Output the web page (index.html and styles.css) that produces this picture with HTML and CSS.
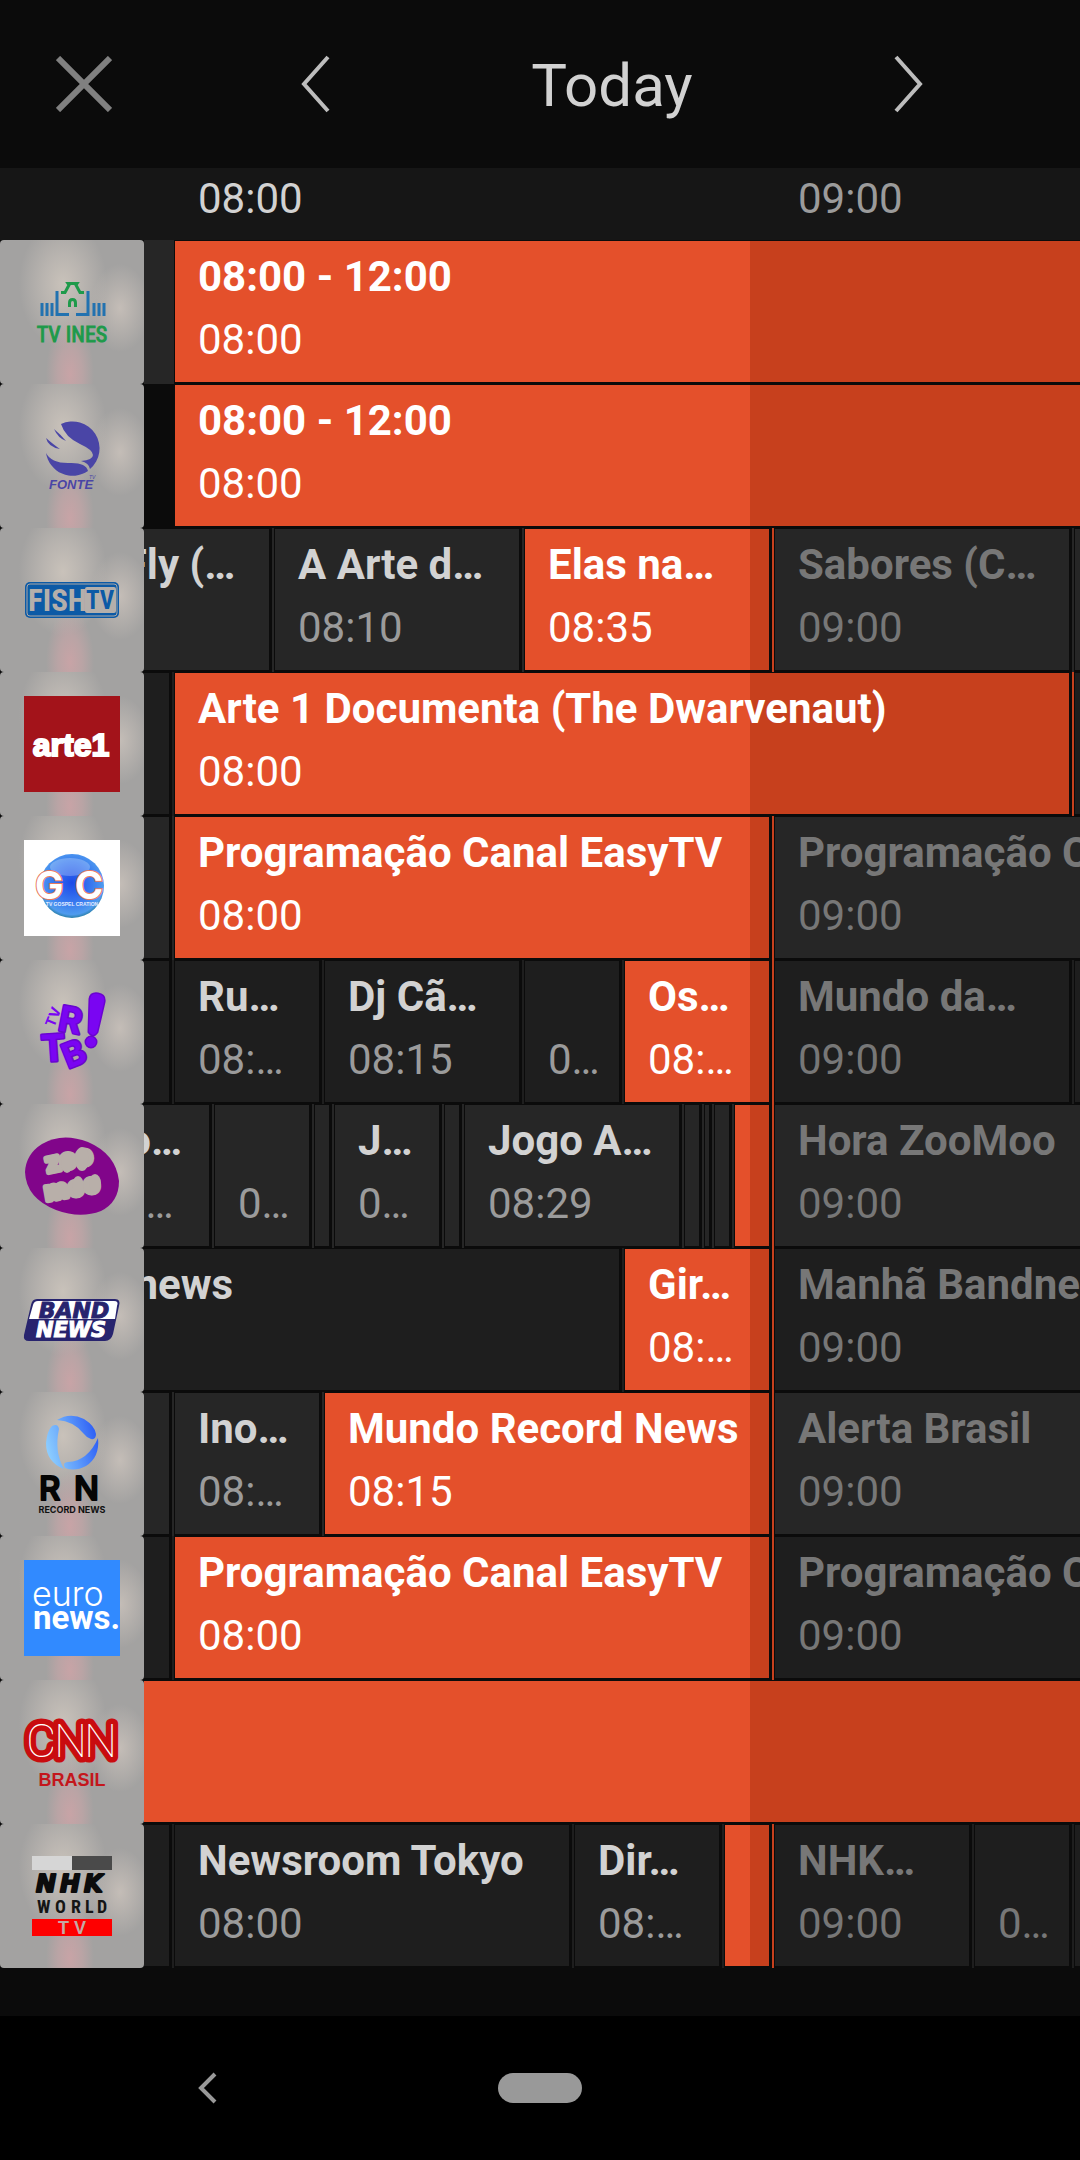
FILE: index.html
```html
<!DOCTYPE html>
<html lang="pt">
<head>
    <meta charset="UTF-8">
    <meta name="viewport" content="width=device-width, initial-scale=1.0">
    <title>TV Guide</title>
    <link rel="stylesheet" href="styles.css">
</head>
<body>

    <header class="topbar">
        <button class="icon-btn close" type="button" aria-label="Close">
            <svg width="56" height="56" viewBox="0 0 56 56"><path d="M2 2L54 54M54 2L2 54"/></svg>
        </button>
        <div class="day-nav">
            <button class="icon-btn" type="button" aria-label="Previous day">
                <svg width="32" height="60" viewBox="0 0 32 60"><path d="M28 3L4 30L28 57"/></svg>
            </button>
            <h1>Today</h1>
            <button class="icon-btn" type="button" aria-label="Next day">
                <svg width="32" height="60" viewBox="0 0 32 60"><path d="M4 3L28 30L4 57"/></svg>
            </button>
        </div>
    </header>

    <div class="timebar">
        <span class="hour">08:00</span>
        <span class="hour next">09:00</span>
    </div>

    <!-- --from / --at: minutes relative to 08:00, --min: length in minutes -->
    <main class="guide">

        <section class="row">
            <div class="channel">
                <svg viewBox="0 0 144 144" role="img" aria-label="TV INES">
                    <g fill="none" stroke="#2272b0" stroke-width="3">
                        <path d="M42 63V76M47 63V76M52 63V76M94 63V76M99 63V76M104 63V76"/>
                        <path d="M57 51V74.500H69M76 74.500H88V51"/>
                    </g>
                    <g fill="none" stroke="#1e9a4a" stroke-width="3">
                        <path d="M61 52.500H65L69 45L68 43.500H77L76 45L80 52.500H84"/>
                        <path d="M69.500 67V63Q69.500 59.500 72.500 59.500Q75.500 59.500 75.500 63V67"/>
                    </g>
                    <text class="narrow" x="72" y="102" font-size="22" text-anchor="middle" fill="#1e9a4a" stroke="#1e9a4a">TV INES</text>
                </svg>
            </div>
            <div class="lane lane-filled">
                <div class="track" style="--from: 0">
                    <div class="show live" style="--at: 0; --min: 240"><div class="box"><h2>08:00 - 12:00</h2><p>08:00</p></div></div>
                </div>
            </div>
        </section>

        <section class="row">
            <div class="channel">
                <svg viewBox="0 0 144 144" role="img" aria-label="Fonte TV">
                    <g fill="#4a45a6">
                        <path d="M61 40A27 27 0 0 1 90 85Q89 79 81 77Q93 76 93 71Q93 66 80 60Q65 53 61 40Z"/>
                        <path d="M46 69Q51 79 68 79Q86 78 88 87A27 27 0 0 1 46 69Z"/>
                        <path d="M54 45Q58 54 66 57Q60 50 54 45Z"/>
                        <path d="M46 54Q48 63 60 65Q54 61 46 54Z"/>
                    </g>
                    <text x="49" y="105" font-size="13" font-weight="700" font-style="italic" fill="#4a45a6">FONTE</text>
                    <text x="89" y="95" font-size="5" font-style="italic" fill="#4a45a6">TV</text>
                </svg>
            </div>
            <div class="lane lane-empty">
                <div class="track" style="--from: 0">
                    <div class="show live" style="--at: 0; --min: 240"><div class="box"><h2>08:00 - 12:00</h2><p>08:00</p></div></div>
                </div>
            </div>
        </section>

        <section class="row">
            <div class="channel">
                <svg viewBox="0 0 144 144" role="img" aria-label="Fish TV">
                    <rect x="25" y="54" width="94" height="36" rx="5" fill="#0c5aa6"/>
                    <rect x="27" y="56" width="90" height="32" rx="3" fill="none" stroke="#aaa7a5"/>
                    <text class="narrow" x="28" y="83" font-size="31" font-weight="700" fill="#b4afab">FISH</text>
                    <rect x="85" y="59" width="31" height="26" rx="2" fill="#b4afab"/>
                    <text class="narrow" x="100" y="81" font-size="25" font-weight="700" text-anchor="middle" fill="#0c5aa6">TV</text>
                </svg>
            </div>
            <div class="lane">
                <div class="track" style="--from: -17">
                    <div class="show" style="--min: 27"><div class="box"><h2>Best Fly (…</h2><p>07:43</p></div></div>
                    <div class="show" style="--min: 25"><div class="box"><h2>A Arte d…</h2><p>08:10</p></div></div>
                    <div class="show live" style="--at: 35; --min: 25"><div class="box"><h2>Elas na…</h2><p>08:35</p></div></div>
                    <div class="show later" style="--min: 30"><div class="box"><h2>Sabores (C…</h2><p>09:00</p></div></div>
                    <div class="show later" style="--min: 30"><div class="box"></div></div>
                </div>
            </div>
        </section>

        <section class="row">
            <div class="channel">
                <svg viewBox="0 0 144 144" role="img" aria-label="Arte 1">
                    <rect x="24" y="24" width="96" height="96" fill="#a3131a"/>
                    <text x="71" y="84" font-size="32" font-weight="700" text-anchor="middle" fill="#fff" stroke="#fff" stroke-width="2">arte1</text>
                </svg>
            </div>
            <div class="lane">
                <div class="track" style="--from: -30">
                    <div class="show" style="--min: 30"><div class="box"></div></div>
                    <div class="show live" style="--at: 0; --min: 90"><div class="box"><h2>Arte 1 Documenta (The Dwarvenaut)</h2><p>08:00</p></div></div>
                    <div class="show later" style="--min: 30"><div class="box"></div></div>
                </div>
            </div>
        </section>

        <section class="row">
            <div class="channel">
                <svg viewBox="0 0 144 144" role="img" aria-label="TV Gospel">
                    <defs>
                        <radialGradient id="globe" cx="50%" cy="45%" r="55%">
                            <stop offset="0" stop-color="#1d49e8"/>
                            <stop offset="0.6" stop-color="#3a7cf0"/>
                            <stop offset="0.9" stop-color="#4f9bee"/>
                            <stop offset="1" stop-color="#2a7fa8"/>
                        </radialGradient>
                    </defs>
                    <rect x="24" y="24" width="96" height="96" fill="#fff"/>
                    <circle cx="72" cy="70" r="32" fill="url(#globe)"/>
                    <ellipse cx="70" cy="51" rx="20" ry="9" fill="#fff" opacity="0.25"/>
                    <text class="geo" x="35 75" y="83" font-size="38" font-weight="700" fill="#fff" stroke="#e8795c" stroke-width="2" paint-order="stroke">GC</text>
                    <text x="72" y="90" font-size="5" font-weight="700" text-anchor="middle" fill="#e4ecff">TV GOSPEL CRATION</text>
                </svg>
            </div>
            <div class="lane">
                <div class="track" style="--from: -60">
                    <div class="show" style="--min: 60"><div class="box"></div></div>
                    <div class="show live" style="--at: 0; --min: 60"><div class="box"><h2>Programação Canal EasyTV</h2><p>08:00</p></div></div>
                    <div class="show later" style="--min: 60"><div class="box"><h2>Programação Canal EasyTV</h2><p>09:00</p></div></div>
                </div>
            </div>
        </section>

        <section class="row">
            <div class="channel">
                <svg viewBox="0 0 144 144" role="img" aria-label="TV RIT B!">
                    <g class="geo" font-weight="700" fill="#7a05f2" stroke="#6a04cf" stroke-width="3" stroke-linejoin="round" paint-order="stroke">
                        <text font-size="14" transform="translate(54 68) rotate(-68)" stroke-width="0">TV</text>
                        <text font-size="35" transform="translate(57 70) rotate(11)">R</text>
                        <text font-size="37" transform="translate(42 102) rotate(-4)">T</text>
                        <text font-size="34" transform="translate(68 109) rotate(-22)">B</text>
                        <path d="M89 72L90 39Q91 33 98 34Q105 35 104 42L97 72Q93 78 89 72Z"/>
                        <circle cx="91" cy="82" r="5"/>
                    </g>
                </svg>
            </div>
            <div class="lane">
                <div class="track" style="--from: -30">
                    <div class="show" style="--min: 30"><div class="box"></div></div>
                    <div class="show" style="--min: 15"><div class="box"><h2>Ru…</h2><p>08:…</p></div></div>
                    <div class="show" style="--min: 20"><div class="box"><h2>Dj Cã…</h2><p>08:15</p></div></div>
                    <div class="show" style="--min: 10"><div class="box"><h2></h2><p>0…</p></div></div>
                    <div class="show live" style="--at: 45; --min: 15"><div class="box"><h2>Os…</h2><p>08:…</p></div></div>
                    <div class="show later" style="--min: 30"><div class="box"><h2>Mundo da…</h2><p>09:00</p></div></div>
                    <div class="show later" style="--min: 30"><div class="box"></div></div>
                </div>
            </div>
        </section>

        <section class="row">
            <div class="channel">
                <svg viewBox="0 0 144 144" role="img" aria-label="ZooMoo">
                    <path d="M25 68Q26 50 42 40Q62 28 88 38Q116 50 119 77Q119 98 101 107Q80 115 56 106Q26 94 25 68Z" fill="#81058a"/>
                    <g class="geo" font-weight="700" fill="#b8afa9" stroke="#b8afa9" stroke-width="5" stroke-linejoin="round">
                        <text font-size="27" transform="translate(47 69) rotate(-12)">zoo</text>
                        <text font-size="26" transform="translate(46 97) rotate(-10)">moo</text>
                    </g>
                    <g fill="#b8afa9">
                        <ellipse cx="67" cy="59" rx="6" ry="10"/>
                        <ellipse cx="82" cy="55" rx="7" ry="12"/>
                        <ellipse cx="78" cy="82" rx="6" ry="10"/>
                        <ellipse cx="95" cy="79" rx="6" ry="9"/>
                    </g>
                </svg>
            </div>
            <div class="lane">
                <div class="track" style="--from: -11">
                    <div class="show" style="--min: 15"><div class="box"><h2>Alo…</h2><p>07:…</p></div></div>
                    <div class="show" style="--min: 10"><div class="box"><h2></h2><p>0…</p></div></div>
                    <div class="show" style="--min: 2"><div class="box"></div></div>
                    <div class="show" style="--min: 11"><div class="box"><h2>J…</h2><p>0…</p></div></div>
                    <div class="show" style="--min: 2"><div class="box"></div></div>
                    <div class="show" style="--min: 22"><div class="box"><h2>Jogo A…</h2><p>08:29</p></div></div>
                    <div class="show" style="--min: 2"><div class="box"></div></div>
                    <div class="show" style="--min: 1"><div class="box"></div></div>
                    <div class="show" style="--min: 2"><div class="box"></div></div>
                    <div class="show live" style="--at: 56; --min: 4"><div class="box"></div></div>
                    <div class="show later" style="--min: 60"><div class="box"><h2>Hora ZooMoo</h2><p>09:00</p></div></div>
                </div>
            </div>
        </section>

        <section class="row">
            <div class="channel">
                <svg viewBox="0 0 144 144" role="img" aria-label="Band News">
                    <path d="M37 51H115Q121 51 119 58L113 86Q111 93 105 93H29Q23 93 24 87L31 57Q32 51 37 51Z" fill="#28246e"/>
                    <path d="M38 53H114Q119 53 117 58L115 71H29L33 57Q34 53 38 53Z" fill="#fff"/>
                    <g class="wide" font-weight="700" font-style="italic" text-anchor="middle">
                        <text x="74" y="70" font-size="22" fill="#28246e" stroke="#28246e">BAND</text>
                        <text x="71" y="89" font-size="21" fill="#fff" stroke="#fff">NEWS</text>
                    </g>
                </svg>
            </div>
            <div class="lane">
                <div class="track" style="--from: -16">
                    <div class="show" style="--min: 61"><div class="box"><h2>Bandnews</h2><p>07:44</p></div></div>
                    <div class="show live" style="--at: 45; --min: 15"><div class="box"><h2>Gir…</h2><p>08:…</p></div></div>
                    <div class="show later" style="--min: 60"><div class="box"><h2>Manhã Bandnews</h2><p>09:00</p></div></div>
                </div>
            </div>
        </section>

        <section class="row">
            <div class="channel">
                <svg viewBox="0 0 144 144" role="img" aria-label="Record News">
                    <defs>
                        <linearGradient id="swirl" x1="46" y1="60" x2="98" y2="45" gradientUnits="userSpaceOnUse">
                            <stop offset="0" stop-color="#8fd0ff"/>
                            <stop offset="0.5" stop-color="#5f9dfb"/>
                            <stop offset="1" stop-color="#2d5ef5"/>
                        </linearGradient>
                    </defs>
                    <g fill="url(#swirl)">
                        <path d="M57 28Q70 20 84 27Q95 34 96 42Q96 48 91 47Q87 46 84 42Q74 29 57 28Z"/>
                        <path d="M52 34Q58 31 59 37Q54 60 64 77Q46 70 46 51Q47 39 52 34Z"/>
                        <path d="M98 46Q100 65 86 74Q75 80 65 76Q62 70 68 70Q88 69 98 46Z"/>
                    </g>
                    <text class="geo" x="39 74" y="108" font-size="33" font-weight="500" fill="#050505" stroke="#050505" stroke-width="2" stroke-linejoin="round">RN</text>
                    <text class="geo" x="72" y="121" font-size="9" font-weight="700" text-anchor="middle" fill="#111">RECORD NEWS</text>
                </svg>
            </div>
            <div class="lane">
                <div class="track" style="--from: -30">
                    <div class="show" style="--min: 30"><div class="box"></div></div>
                    <div class="show" style="--min: 15"><div class="box"><h2>Ino…</h2><p>08:…</p></div></div>
                    <div class="show live" style="--at: 15; --min: 45"><div class="box"><h2>Mundo Record News</h2><p>08:15</p></div></div>
                    <div class="show later" style="--min: 60"><div class="box"><h2>Alerta Brasil</h2><p>09:00</p></div></div>
                </div>
            </div>
        </section>

        <section class="row">
            <div class="channel">
                <svg viewBox="0 0 144 144" role="img" aria-label="Euronews">
                    <rect x="24" y="24" width="96" height="96" fill="#318aff"/>
                    <text class="geo" x="32" y="70" font-size="34" font-weight="300" fill="#fff">euro</text>
                    <text class="round" x="33" y="93" font-size="33" font-weight="700" fill="#fff">news.</text>
                </svg>
            </div>
            <div class="lane">
                <div class="track" style="--from: -60">
                    <div class="show" style="--min: 60"><div class="box"></div></div>
                    <div class="show live" style="--at: 0; --min: 60"><div class="box"><h2>Programação Canal EasyTV</h2><p>08:00</p></div></div>
                    <div class="show later" style="--min: 60"><div class="box"><h2>Programação Canal EasyTV</h2><p>09:00</p></div></div>
                </div>
            </div>
        </section>

        <section class="row">
            <div class="channel">
                <svg viewBox="0 0 144 144" role="img" aria-label="CNN Brasil">
                    <text class="round" x="26 54 84" y="77" font-size="47" font-weight="100" fill="#fff" stroke="#c90c0f" stroke-width="11" stroke-linejoin="round" paint-order="stroke">CNN</text>
                    <text x="72" y="106" font-size="18" font-weight="700" text-anchor="middle" fill="#c4161c">BRASIL</text>
                </svg>
            </div>
            <div class="lane">
                <div class="track" style="--from: -30">
                    <div class="show live" style="--at: -30; --min: 180"><div class="box"></div></div>
                </div>
            </div>
        </section>

        <section class="row">
            <div class="channel">
                <svg viewBox="0 0 144 144" role="img" aria-label="NHK World TV">
                    <rect x="32" y="32" width="40" height="14" fill="#d6d6d6"/>
                    <rect x="72" y="32" width="40" height="14" fill="#4a4a4a"/>
                    <text class="wide" x="36 60 84" y="68" font-size="24" font-weight="700" font-style="italic" fill="#0c0c0c" stroke="#0c0c0c" stroke-width="2" stroke-linejoin="round">NHK</text>
                    <text class="narrow" x="37 55 71 85 97" y="89" font-size="18" font-weight="700" fill="#151515">WORLD</text>
                    <rect x="32" y="95" width="80" height="17" fill="#fe0000"/>
                    <text x="58 74" y="110" font-size="18" font-weight="700" fill="#c4a9a5">TV</text>
                </svg>
            </div>
            <div class="lane">
                <div class="track" style="--from: -30">
                    <div class="show" style="--min: 30"><div class="box"></div></div>
                    <div class="show" style="--min: 40"><div class="box"><h2>Newsroom Tokyo</h2><p>08:00</p></div></div>
                    <div class="show" style="--min: 15"><div class="box"><h2>Dir…</h2><p>08:…</p></div></div>
                    <div class="show live" style="--at: 55; --min: 5"><div class="box"></div></div>
                    <div class="show later" style="--min: 20"><div class="box"><h2>NHK…</h2><p>09:00</p></div></div>
                    <div class="show later" style="--min: 10"><div class="box"><h2></h2><p>0…</p></div></div>
                    <div class="show later" style="--min: 30"><div class="box"></div></div>
                </div>
            </div>
        </section>

    </main>

    <nav class="sysbar">
        <button class="icon-btn back" type="button" aria-label="Back">
            <svg width="20" height="32" viewBox="0 0 20 32"><path d="M18 2L4 16L18 30"/></svg>
        </button>
        <button class="home" type="button" aria-label="Home"></button>
    </nav>

</body>
</html>
```

FILE: styles.css
```css
* { box-sizing: border-box; margin: 0; padding: 0; }

:root {
    --minute: 10px;
    --now: 576px;
    --line: #0b0b0b;
}

body {
    display: flex;
    flex-direction: column;
    min-height: 100vh;
    background: #0b0b0b;
    color: #d2d2d2;
    font-family: Roboto, "Liberation Sans", sans-serif;
    font-size: 42px;
    overflow-x: hidden;
}

button { background: none; border: none; cursor: pointer; }
svg { display: block; }

/* header */
.topbar { display: flex; height: 168px; padding-right: 24px; }
.icon-btn { display: flex; align-items: center; justify-content: center; }
.icon-btn path { fill: none; stroke: #bdbdbd; stroke-width: 4; }
.close { width: 168px; }
.icon-btn.close path { stroke: #808080; stroke-width: 6; }
.day-nav { display: flex; flex: 1; }
.day-nav > * { flex: 1; }
.day-nav h1 { font-size: 60px; font-weight: 400; line-height: 172px; text-align: center; }

.timebar { display: flex; height: 72px; padding-left: 174px; background: #161616; overflow: hidden; }
.hour { flex: none; width: 600px; padding-left: 24px; line-height: 62px; }
.hour.next { color: #9b9b9b; }

/* guide */
.guide { flex: 1; padding-bottom: 48px; }
.row { display: flex; height: 144px; --cell: #262626; }
.row:nth-child(even) { --cell: #1e1e1e; }

.channel {
    flex: none;
    width: 144px;
    border-radius: 4px;
    background:
        radial-gradient(ellipse 24px 54px at 70px 134px, rgba(212, 164, 168, 0.75), rgba(208, 166, 169, 0.5) 50%, rgba(200, 170, 170, 0) 100%),
        radial-gradient(ellipse 44px 64px at 63px 44px, #c9c2ba, rgba(194, 188, 182, 0.7) 45%, rgba(180, 176, 172, 0) 100%),
        radial-gradient(ellipse 30px 44px at 120px 68px, #c4bdb7, rgba(180, 176, 172, 0) 100%),
        #a3a2a1;
}
.channel text { font-family: "Liberation Sans", Arial, sans-serif; }
.channel .narrow { font-family: "Liberation Sans Narrow", "Roboto Condensed", "Liberation Sans", sans-serif; }
.channel .wide, .channel .wide text { font-family: "DejaVu Sans", sans-serif; }
.channel .round { font-family: Roboto, sans-serif; }
.channel .geo, .channel .geo text { font-family: Inter, sans-serif; }

.lane { flex: 1; min-width: 0; overflow: hidden; }
.lane-filled { background: #262626; }
.lane-empty { background: #0b0b0b; }
.track { display: flex; height: 100%; margin-left: calc(30px + var(--from) * var(--minute)); }

.show {
    flex: none;
    width: calc(var(--min) * var(--minute));
    padding-right: 2px;
    background: var(--cell);
}
.box {
    height: 100%;
    padding: 4px 0 0 23px;
    border: solid var(--line);
    border-width: 1px 3px 2px 1px;
    overflow: hidden;
    white-space: nowrap;
}
.box:empty { padding: 0; }
.show h2, .show p { height: 63px; font-size: 42px; line-height: 63px; }
.show h2 { font-weight: 700; }
.show p { color: #9b9b9b; }

.live { background: linear-gradient(to right, #e4502b calc(var(--now) - var(--at) * var(--minute)), #c7401d 0); }
.live h2, .live p { color: #fff; }
.later h2, .later p { color: #777; }

/* system buttons */
.sysbar {
    display: grid;
    grid-template-columns: 1fr auto 1fr;
    align-items: center;
    height: 144px;
    background: #000;
}
.back { justify-self: center; padding-right: 84px; }
.icon-btn.back path { stroke: #999; }
.home { width: 84px; height: 30px; border-radius: 15px; background: #999; }
```
